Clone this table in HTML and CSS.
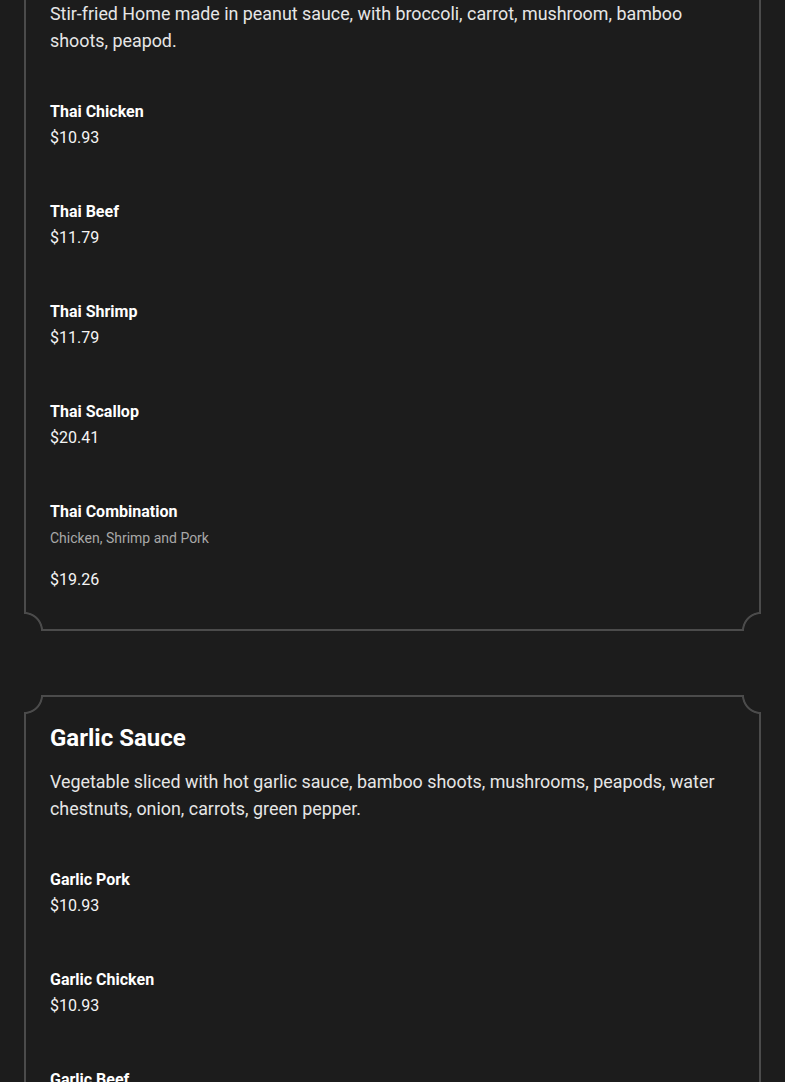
FILE: index.html
```html
<!DOCTYPE html>
<html lang="en">
<head>
<meta charset="utf-8">
<title>Menu</title>
<link rel="stylesheet" href="styles.css">
</head>
<body>
<main class="menu">
  <section class="card card-first">
    <span class="corner tl"></span><span class="corner tr"></span><span class="corner bl"></span><span class="corner br"></span>
    <p class="card-desc">Stir-fried Home made in peanut sauce, with broccoli, carrot, mushroom, bamboo shoots, peapod.</p>
    <div class="item"><h3 class="item-name">Thai Chicken</h3><div class="item-price">$10.93</div></div>
    <div class="item"><h3 class="item-name">Thai Beef</h3><div class="item-price">$11.79</div></div>
    <div class="item"><h3 class="item-name">Thai Shrimp</h3><div class="item-price">$11.79</div></div>
    <div class="item"><h3 class="item-name">Thai Scallop</h3><div class="item-price">$20.41</div></div>
    <div class="item"><h3 class="item-name">Thai Combination</h3><p class="item-desc">Chicken, Shrimp and Pork</p><div class="item-price">$19.26</div></div>
  </section>
  <section class="card">
    <span class="corner tl"></span><span class="corner tr"></span><span class="corner bl"></span><span class="corner br"></span>
    <h2 class="card-title">Garlic Sauce</h2>
    <p class="card-desc">Vegetable sliced with hot garlic sauce, bamboo shoots, mushrooms, peapods, water chestnuts, onion, carrots, green pepper.</p>
    <div class="item"><h3 class="item-name">Garlic Pork</h3><div class="item-price">$10.93</div></div>
    <div class="item"><h3 class="item-name">Garlic Chicken</h3><div class="item-price">$10.93</div></div>
    <div class="item"><h3 class="item-name">Garlic Beef</h3><div class="item-price">$11.79</div></div>
  </section>
</main>
</body>
</html>
```
FILE: styles.css
```css
:root {
  --bg: #1c1c1c;
  --line: #4b4b4b;
}
html, body {
  margin: 0;
  background: var(--bg);
  color: #ececec;
  font-family: Roboto, "Liberation Sans", Arial, sans-serif;
}
.menu {
  padding: 0 24px 40px;
  display: flex;
  flex-direction: column;
  gap: 64px;
}
.card {
  position: relative;
  border: 2px solid var(--line);
  padding: 26px 24px 11px;
}
.card-first {
  margin-top: -28.5px;
}
.corner {
  position: absolute;
  width: 19px;
  height: 19px;
}
.corner.tl { top: -2px; left: -2px; background: radial-gradient(circle at 0 0, var(--bg) 16.6px, var(--line) 17.4px, var(--line) 18.6px, var(--bg) 19.4px); }
.corner.tr { top: -2px; right: -2px; background: radial-gradient(circle at 100% 0, var(--bg) 16.6px, var(--line) 17.4px, var(--line) 18.6px, var(--bg) 19.4px); }
.corner.bl { bottom: -2px; left: -2px; background: radial-gradient(circle at 0 100%, var(--bg) 16.6px, var(--line) 17.4px, var(--line) 18.6px, var(--bg) 19.4px); }
.corner.br { bottom: -2px; right: -2px; background: radial-gradient(circle at 100% 100%, var(--bg) 16.6px, var(--line) 17.4px, var(--line) 18.6px, var(--bg) 19.4px); }
.card-title {
  margin: 0 0 15px;
  font-size: 24px;
  line-height: 30px;
  font-weight: 700;
  color: #ffffff;
}
.card-desc {
  margin: 0 0 22px;
  font-size: 17.88px;
  line-height: 27px;
  color: #e6e6e6;
}
.item {
  padding: 23px 0 25px;
}
.item-name {
  margin: 0;
  font-size: 16px;
  line-height: 26px;
  font-weight: 700;
  color: #ffffff;
}
.item-price {
  font-size: 16px;
  line-height: 26px;
  color: #f4f4f4;
}
.item-desc {
  margin: 0 0 16px;
  font-size: 14px;
  line-height: 26px;
  color: #a8a8a8;
}
```
